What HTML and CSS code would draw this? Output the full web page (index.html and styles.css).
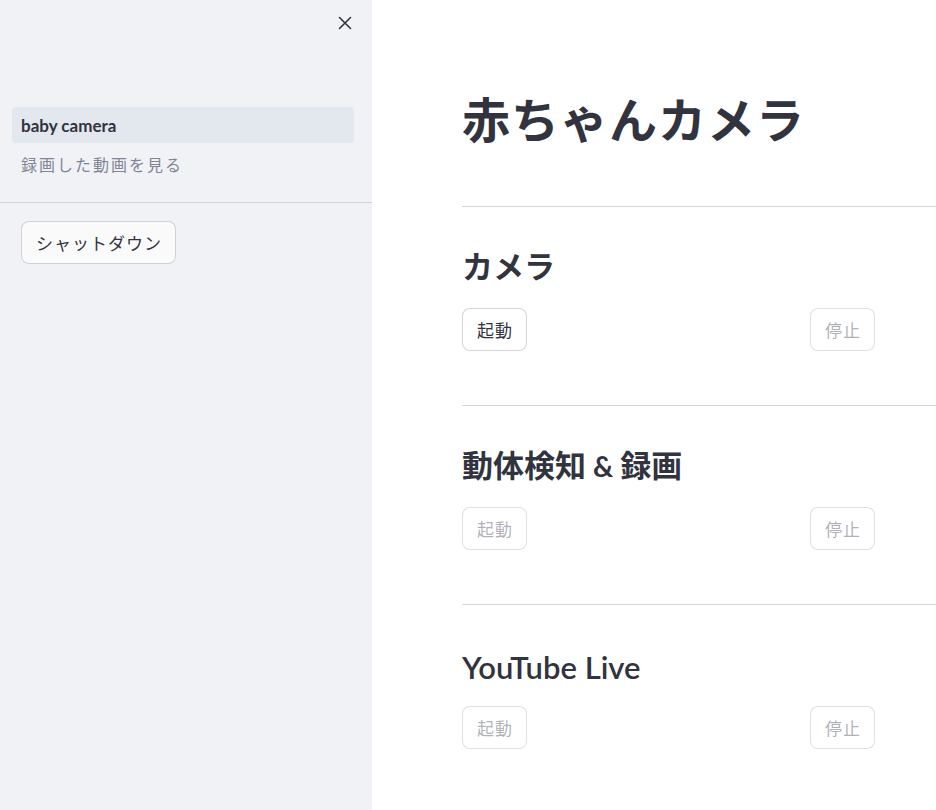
FILE: index.html
```html
<!DOCTYPE html>
<html lang="ja">
<head>
<meta charset="utf-8">
<title>赤ちゃんカメラ</title>
<link rel="stylesheet" href="styles.css">
</head>
<body>
<div class="app">
  <aside class="sidebar">
    <div class="sidebar-top">
      <button class="close-btn" aria-label="close">
        <svg width="14" height="14" viewBox="0 0 14 14"><path d="M1.5 1.5 L12.5 12.5 M12.5 1.5 L1.5 12.5" stroke="#31333F" stroke-width="1.6" fill="none" stroke-linecap="round"/></svg>
      </button>
    </div>
    <nav class="nav">
      <a class="nav-item active">baby camera</a>
      <a class="nav-item">録画した動画を見る</a>
    </nav>
    <div class="sidebar-divider"></div>
    <div class="sidebar-body">
      <button class="btn">シャットダウン</button>
    </div>
  </aside>
  <main class="main">
    <div class="block">
      <h1 class="title">赤ちゃんカメラ</h1>
      <hr class="divider">
      <section class="section">
        <h2 class="heading">カメラ</h2>
        <div class="cols">
          <div class="col"><button class="btn">起動</button></div>
          <div class="col"><button class="btn" disabled>停止</button></div>
        </div>
      </section>
      <hr class="divider">
      <section class="section">
        <h2 class="heading">動体検知 <span class="amp">&amp;</span> 録画</h2>
        <div class="cols">
          <div class="col"><button class="btn" disabled>起動</button></div>
          <div class="col"><button class="btn" disabled>停止</button></div>
        </div>
      </section>
      <hr class="divider">
      <section class="section">
        <h2 class="heading latin">YouTube Live</h2>
        <div class="cols">
          <div class="col"><button class="btn" disabled>起動</button></div>
          <div class="col"><button class="btn" disabled>停止</button></div>
        </div>
      </section>
    </div>
  </main>
</div>
</body>
</html>
```
FILE: styles.css
```css
* { box-sizing: border-box; }
html, body { margin: 0; padding: 0; }
body {
  width: 936px;
  height: 810px;
  overflow: hidden;
  font-family: "Noto Sans CJK JP", "Lato", sans-serif;
  color: #31333F;
  background: #ffffff;
}
.app {
  display: flex;
  height: 810px;
}
.sidebar {
  width: 372px;
  flex: 0 0 372px;
  background: #f0f2f6;
  display: flex;
  flex-direction: column;
}
.sidebar-top {
  height: 107px;
  display: flex;
  justify-content: flex-end;
  align-items: flex-start;
  padding: 16px 20px 0 0;
}
.close-btn {
  border: none;
  background: transparent;
  padding: 0;
  width: 14px;
  height: 14px;
  display: flex;
}
.nav {
  display: flex;
  flex-direction: column;
  padding: 0 18px 23px 12px;
}
.nav-item {
  height: 36px;
  display: flex;
  align-items: center;
  padding-left: 9px;
  border-radius: 4px;
  font-size: 16px;
  color: #808495;
  letter-spacing: 2px;
}
.nav-item + .nav-item { padding-top: 6px; }
.nav-item.active {
  background: #e3e7ee;
  color: #31333F;
  font-family: "Lato", sans-serif;
  font-weight: 700;
  font-size: 17px;
  letter-spacing: 0;
}
.sidebar-divider {
  height: 1px;
  background: #d2d3d8;
}
.sidebar-body {
  padding: 18px 21px;
}
.btn {
  font-family: "Noto Sans CJK JP", sans-serif;
  font-size: 17px;
  letter-spacing: 1px;
  color: #31333F;
  background: #ffffff;
  border: 1px solid rgba(49, 51, 63, 0.2);
  border-radius: 8px;
  height: 43px;
  padding: 0 13px 0 14px;
  display: inline-flex;
  align-items: center;
}
.sidebar .btn { background: #fafafb; }
.btn:disabled {
  color: rgba(49, 51, 63, 0.4);
  border-color: rgba(49, 51, 63, 0.15);
  background: #ffffff;
}
.main {
  flex: 1;
  padding-left: 90px;
  overflow: hidden;
}
.block {
  width: 704px;
  display: flex;
  flex-direction: column;
}
.title {
  margin: 88px 0 0;
  font-size: 48px;
  line-height: 58px;
  font-weight: 700;
  letter-spacing: 1px;
}
.divider {
  margin: 0;
  border: none;
  height: 1px;
  background: #d5d6da;
}
.title + .divider { margin-top: 60px; }
.section {
  padding: 38px 0 54px;
}
.heading {
  margin: 0;
  height: 40px;
  font-size: 31px;
  line-height: 40px;
  font-weight: 700;
}
.heading .amp {
  font-family: "Lato", sans-serif;
  font-weight: 700;
  font-size: 28px;
  line-height: 1;
}
.heading.latin {
  font-family: "Lato", sans-serif;
  font-weight: 600;
  font-size: 31px;
  padding-top: 4px;
}
.cols {
  display: grid;
  grid-template-columns: 332px 332px;
  column-gap: 16px;
  margin-top: 23px;
}
```
